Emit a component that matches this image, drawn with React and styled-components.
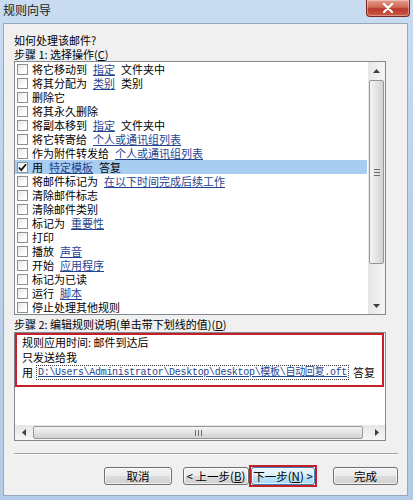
import React from 'react'
import styled, { createGlobalStyle } from 'styled-components'

const GlobalStyle = createGlobalStyle`
  html, body {
    margin: 0;
    padding: 0;
  }
  body {
    width: 413px;
    height: 500px;
    overflow: hidden;
    background: #b9d1ea;
    font-family: "Noto Sans CJK SC", "Liberation Sans", sans-serif;
  }
`

const actions = [
  { text: '将它移动到', link: '指定', after: '文件夹中' },
  { text: '将其分配为', link: '类别', after: '类别' },
  { text: '删除它' },
  { text: '将其永久删除' },
  { text: '将副本移到', link: '指定', after: '文件夹中' },
  { text: '将它转寄给', link: '个人或通讯组列表' },
  { text: '作为附件转发给', link: '个人或通讯组列表' },
  { text: '用', link: '特定模板', after: '答复', checked: true },
  { text: '将邮件标记为', link: '在以下时间完成后续工作' },
  { text: '清除邮件标志' },
  { text: '清除邮件类别' },
  { text: '标记为', link: '重要性' },
  { text: '打印' },
  { text: '播放', link: '声音' },
  { text: '开始', link: '应用程序' },
  { text: '标记为已读' },
  { text: '运行', link: '脚本' },
  { text: '停止处理其他规则' },
]

const Window = styled.div`
  width: 413px;
  height: 500px;
  box-sizing: border-box;
  display: flex;
  flex-direction: column;
  padding: 0 5px 4px 3px;
  background: linear-gradient(180deg, #c9dcf1 0%, #bcd2ec 40%, #b3cbe6 100%);
`

const TitleBar = styled.div`
  height: 23px;
  display: flex;
  justify-content: space-between;
  align-items: flex-start;
`

const Title = styled.span`
  padding-top: 3px;
  font-size: 12px;
  line-height: 14px;
  color: #1a1a1a;
`

const CloseButton = styled.div`
  width: 44px;
  height: 17px;
  margin-right: -2px;
  box-sizing: border-box;
  display: flex;
  align-items: center;
  justify-content: center;
  border: 1px solid #7a2a24;
  border-top: none;
  border-radius: 0 0 4px 4px;
  background: linear-gradient(180deg, #e59b8b 0%, #d06a55 45%, #b8382a 55%, #cf5a44 100%);
  box-shadow: inset 0 0 0 1px rgba(255, 255, 255, 0.35);
`

const Client = styled.div`
  flex: 1;
  display: flex;
  flex-direction: column;
  padding: 9px 9px 0 10px;
  background: #f0f0f0;
  border: 1px solid #98a8bc;
  font-size: 11px;
  line-height: 14px;
  color: #000;
`

const Line = styled.div`
  height: 14px;
  white-space: nowrap;
`

const ListBox = styled.div`
  width: 372px;
  height: 254px;
  box-sizing: border-box;
  display: flex;
  background: #fff;
  border: 1px solid #828790;
`

const Items = styled.div`
  flex: 1;
  display: flex;
  flex-direction: column;
  padding-right: 1px;
`

const Item = styled.div`
  height: 14px;
  display: flex;
  align-items: center;
  padding-left: 2px;
  white-space: nowrap;
  background: ${(p) => (p.$selected ? '#a9cdf0' : 'transparent')};
`

const Box = styled.span`
  width: 11px;
  height: 11px;
  box-sizing: border-box;
  margin-right: 4px;
  flex: none;
  display: flex;
  align-items: center;
  justify-content: center;
  border: 1px solid #8e8f8f;
  background: linear-gradient(135deg, #e6e6e6 0%, #fbfbfb 60%, #fff 100%);
`

const Link = styled.span`
  margin-left: 6px;
  color: #1f4590;
  text-decoration: underline;
`

const After = styled.span`
  margin-left: 6px;
`

const VScroll = styled.div`
  width: 17px;
  display: flex;
  flex-direction: column;
  background: linear-gradient(90deg, #e6e6e6 0%, #f6f6f6 100%);
`

const HScroll = styled.div`
  height: 15px;
  display: flex;
  background: linear-gradient(180deg, #e6e6e6 0%, #f6f6f6 100%);
`

const Arrow = styled.div`
  flex: none;
  width: ${(p) => (p.$horizontal ? '17px' : 'auto')};
  height: ${(p) => (p.$horizontal ? 'auto' : '17px')};
  display: flex;
  align-items: center;
  justify-content: center;
`

const Track = styled.div`
  flex: 1;
  display: flex;
  flex-direction: ${(p) => (p.$horizontal ? 'row' : 'column')};
  padding: ${(p) => (p.$horizontal ? '0 0 0 1px' : '1px 0 0 0')};
`

const Thumb = styled.div`
  box-sizing: border-box;
  width: ${(p) => (p.$horizontal ? '330px' : '15px')};
  height: ${(p) => (p.$horizontal ? '13px' : '184px')};
  margin: ${(p) => (p.$horizontal ? '1px 0' : '0 1px')};
  display: flex;
  align-items: center;
  justify-content: center;
  border: 1px solid #979797;
  border-radius: 2px;
  background: linear-gradient(
    ${(p) => (p.$horizontal ? '180deg' : '90deg')},
    #f4f4f4 0%,
    #e4e4e4 50%,
    #d2d2d2 100%
  );
`

const StepLabel = styled(Line)`
  margin-top: 2px;
`

const DescBox = styled.div`
  width: 372px;
  height: 109px;
  margin-top: 1px;
  box-sizing: border-box;
  display: flex;
  flex-direction: column;
  justify-content: space-between;
  background: #fff;
  border: 1px solid #828790;
`

const Highlight = styled.div`
  height: 54px;
  box-sizing: border-box;
  margin-right: 1px;
  padding-left: 5px;
  border: 2px solid #c3202b;
  line-height: 15px;
`

const DescLine = styled.div`
  height: 15px;
  display: flex;
  align-items: center;
  white-space: nowrap;
`

const PathLink = styled.span`
  margin: 0 4px 0 3px;
  padding: 0 1px;
  line-height: 13px;
  font-family: "Liberation Mono", "Noto Sans CJK SC", monospace;
  font-size: 10px;
  letter-spacing: -0.3px;
  color: #1f4590;
  text-decoration: underline;
  border: 1px dotted #3a3a3a;
`

const Separator = styled.div`
  margin-top: 12px;
  height: 0;
  border-top: 1px solid #a0a0a0;
  border-bottom: 1px solid #fff;
`

const ButtonRow = styled.div`
  margin-top: 10px;
  display: flex;
  justify-content: flex-end;
  align-items: center;
`

const Button = styled.div`
  width: ${(p) => p.$w}px;
  height: 18px;
  box-sizing: border-box;
  margin-left: ${(p) => p.$gap || 0}px;
  display: flex;
  align-items: center;
  justify-content: center;
  white-space: nowrap;
  font-size: 11.5px;
  border: 1px solid ${(p) => (p.$default ? '#3c7fb1' : '#707070')};
  border-radius: 3px;
  background: ${(p) =>
    p.$default
      ? 'linear-gradient(180deg, #eaf6fd 0%, #d9f0fc 50%, #bee6fd 51%, #a7d9f5 100%)'
      : 'linear-gradient(180deg, #f2f2f2 0%, #ebebeb 50%, #dddddd 51%, #cfcfcf 100%)'};
  box-shadow: inset 0 0 0 1px rgba(255, 255, 255, 0.7);
`

const Annotated = styled.div`
  padding: 0;
  border: 2px solid #c3202b;
  display: flex;
`

const Triangle = ({ dir }) => {
  const pts = {
    up: '0,5 7,5 3.5,1',
    down: '0,1 7,1 3.5,5',
    left: '5,0 5,7 1,3.5',
    right: '1,0 1,7 5,3.5',
  }[dir]
  const horizontal = dir === 'left' || dir === 'right'
  return (
    <svg width={horizontal ? 6 : 7} height={horizontal ? 7 : 6} viewBox={horizontal ? '0 0 6 7' : '0 0 7 6'}>
      <polygon points={pts} fill="#3f3f3f" />
    </svg>
  )
}

const Grip = ({ horizontal }) =>
  horizontal ? (
    <svg width="7" height="6" viewBox="0 0 7 6">
      <path d="M0.5 0v6M3.5 0v6M6.5 0v6" stroke="#6b6b6b" strokeWidth="1" />
    </svg>
  ) : (
    <svg width="6" height="7" viewBox="0 0 6 7">
      <path d="M0 0.5h6M0 3.5h6M0 6.5h6" stroke="#6b6b6b" strokeWidth="1" />
    </svg>
  )

const Check = () => (
  <svg width="9" height="9" viewBox="0 0 9 9">
    <path d="M1 4.5l2.2 2.5L8 1.2" fill="none" stroke="#111" strokeWidth="1.8" />
  </svg>
)

const App = () => {
  return (
    <>
      <GlobalStyle />
      <Window>
        <TitleBar>
          <Title>规则向导</Title>
          <CloseButton>
            <svg width="12" height="10" viewBox="0 0 12 10">
              <path d="M2 1l8 8M10 1l-8 8" stroke="#fff" strokeWidth="2.2" strokeLinecap="round" />
            </svg>
          </CloseButton>
        </TitleBar>
        <Client>
          <Line>如何处理该邮件?</Line>
          <Line>
            步骤 1: 选择操作(<u>C</u>)
          </Line>
          <ListBox>
            <Items>
              {actions.map((a, i) => (
                <Item key={i} $selected={a.checked}>
                  <Box>{a.checked && <Check />}</Box>
                  <span>{a.text}</span>
                  {a.link && <Link>{a.link}</Link>}
                  {a.after && <After>{a.after}</After>}
                </Item>
              ))}
            </Items>
            <VScroll>
              <Arrow>
                <Triangle dir="up" />
              </Arrow>
              <Track>
                <Thumb>
                  <Grip />
                </Thumb>
              </Track>
              <Arrow>
                <Triangle dir="down" />
              </Arrow>
            </VScroll>
          </ListBox>
          <StepLabel>
            步骤 2: 编辑规则说明(单击带下划线的值)(<u>D</u>)
          </StepLabel>
          <DescBox>
            <Highlight>
              <DescLine>规则应用时间: 邮件到达后</DescLine>
              <DescLine>只发送给我</DescLine>
              <DescLine>
                用<PathLink>D:\Users\Administrator\Desktop\desktop\模板\自动回复.oft</PathLink>答复
              </DescLine>
            </Highlight>
            <HScroll>
              <Arrow $horizontal>
                <Triangle dir="left" />
              </Arrow>
              <Track $horizontal>
                <Thumb $horizontal>
                  <Grip horizontal />
                </Thumb>
              </Track>
              <Arrow $horizontal>
                <Triangle dir="right" />
              </Arrow>
            </HScroll>
          </DescBox>
          <Separator />
          <ButtonRow>
            <Button $w={68}>取消</Button>
            <Button $w={66} $gap={11}>
              &lt; 上一步(<u>B</u>)
            </Button>
            <Annotated>
              <Button $w={64} $default>
                下一步(<u>N</u>) &gt;
              </Button>
            </Annotated>
            <Button $w={65} $gap={16}>
              完成
            </Button>
          </ButtonRow>
        </Client>
      </Window>
    </>
  )
}

export default App
